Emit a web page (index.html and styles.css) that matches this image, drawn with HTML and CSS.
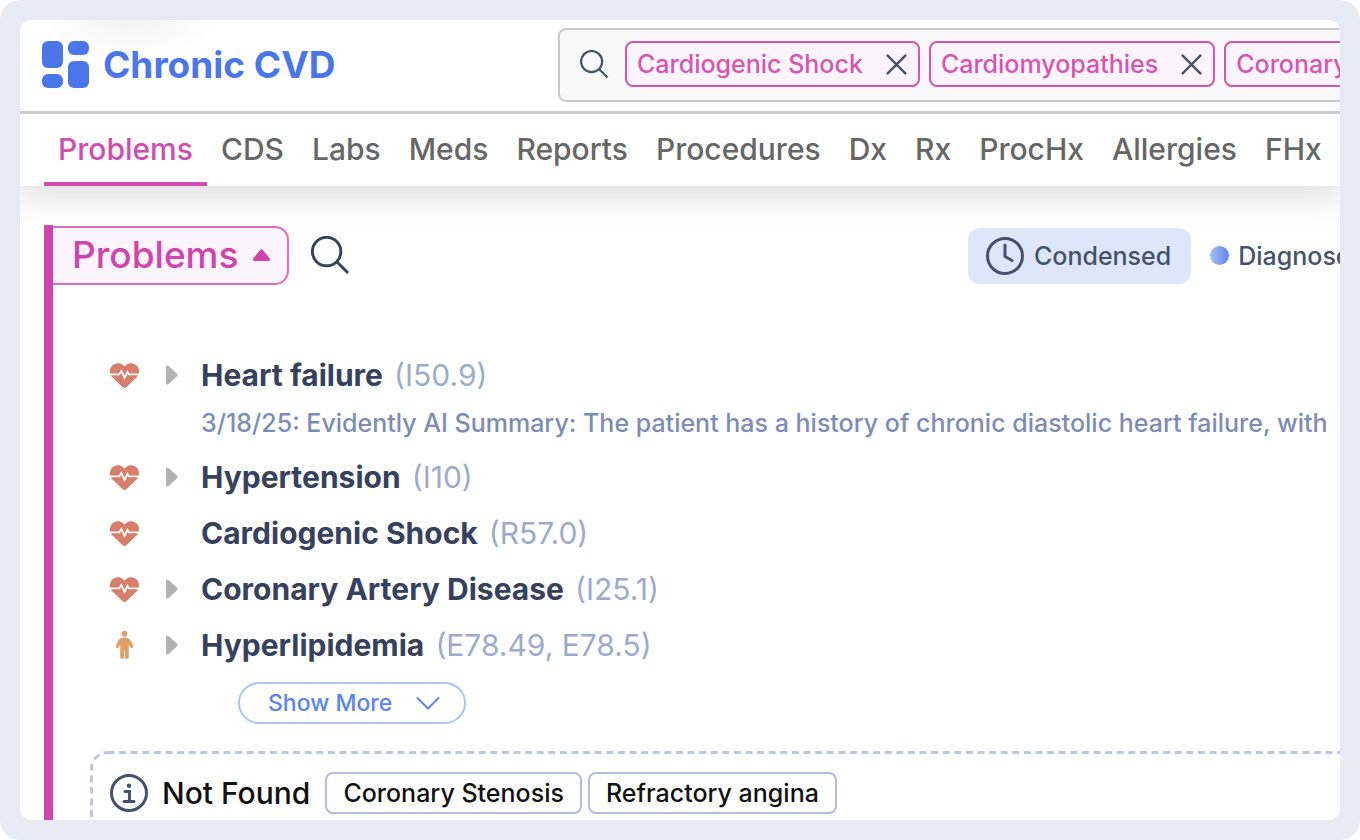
FILE: index.html
```html
<!DOCTYPE html>
<html lang="en">
<head>
<meta charset="utf-8">
<title>Chronic CVD</title>
<link rel="stylesheet" href="styles.css">
</head>
<body>
<svg class="defs" aria-hidden="true">
  <symbol id="search" viewBox="0 0 40 40"><circle cx="16" cy="16" r="14.6"/><path d="M26.5 26.5 38 38"/></symbol>
  <symbol id="close" viewBox="0 0 24 24"><path d="M2 2 22 22M22 2 2 22"/></symbol>
  <symbol id="heart" viewBox="0 0 29 25"><path d="M14.500 25C13.800 25 13.200 24.700 12.700 24.200L2.500 14.500C-.8 11.200-.8 6 2 2.800 5-.4 9.800-.6 13 2.200L14.500 3.600 16 2.200C19.200-.6 24-.4 27 2.800c2.800 3.200 2.800 8.400-.5 11.700L16.300 24.200C15.800 24.700 15.200 25 14.500 25z"/><path class="pulse" d="M0 11.300H9.200L11.400 8 14.600 14.800 17.400 9 18.800 11.300H29"/></symbol>
  <symbol id="person" viewBox="0 0 20 30"><circle cx="10" cy="3.2" r="3.1"/><path d="M10 7c-3.300 0-5.400 1.300-6.700 3.500L1 15.800c-.9 2.200 1.900 3.500 2.900 1.500L5.500 14.800V28c0 2.300 4.100 2.300 4.100 0v-7h.8v7c0 2.300 4.100 2.300 4.100 0V14.800l1.600 2.500c1 2 3.800.7 2.900-1.500l-2.300-5.300C15.400 8.300 13.300 7 10 7z"/></symbol>
  <symbol id="caret" viewBox="0 0 12 20"><path d="M0 2C0 .4 1.600-.2 2.700 1l8.300 7.800c.8.800.8 1.600 0 2.400L2.700 19C1.600 20.200 0 19.600 0 18z"/></symbol>
</svg>
<div class="frame">
  <div class="panel">
    <header class="header">
      <div class="brand">
        <svg class="logo" viewBox="0 0 47 47" aria-hidden="true"><rect x="0" y="0" width="21" height="27" rx="6"/><rect x="26" y="0" width="21" height="14" rx="6"/><rect x="0" y="33" width="21" height="14" rx="6"/><rect x="26" y="20" width="21" height="27" rx="6"/></svg>
        <h1 class="title">Chronic CVD</h1>
      </div>
      <div class="searchbar">
        <svg class="icon icon-small" aria-hidden="true"><use href="#search"/></svg>
        <span class="chip">Cardiogenic Shock<button class="remove" aria-label="Remove Cardiogenic Shock"><svg><use href="#close"/></svg></button></span>
        <span class="chip">Cardiomyopathies<button class="remove" aria-label="Remove Cardiomyopathies"><svg><use href="#close"/></svg></button></span>
        <span class="chip">Coronary</span>
      </div>
    </header>
    <nav class="tabs">
      <a class="tab active" href="#problems">Problems</a>
      <a class="tab" href="#cds">CDS</a>
      <a class="tab" href="#labs">Labs</a>
      <a class="tab" href="#meds">Meds</a>
      <a class="tab" href="#reports">Reports</a>
      <a class="tab" href="#procedures">Procedures</a>
      <a class="tab" href="#dx">Dx</a>
      <a class="tab" href="#rx">Rx</a>
      <a class="tab" href="#prochx">ProcHx</a>
      <a class="tab" href="#allergies">Allergies</a>
      <a class="tab" href="#fhx">FHx</a>
    </nav>
    <main class="content">
      <div class="toolbar">
        <button class="section-toggle">Problems<svg class="up" viewBox="0 0 18 12" aria-hidden="true"><path d="M7.800.8 1 9c-1 1.400-.4 3 1.200 3h13.600c1.600 0 2.200-1.600 1.200-3L10.200.8c-.7-.9-1.700-.9-2.400 0z"/></svg></button>
        <button class="plain" aria-label="Search problems"><svg class="icon icon-large"><use href="#search"/></svg></button>
        <div class="views">
          <button class="condensed"><svg class="badge" viewBox="0 0 38 38" aria-hidden="true"><circle cx="19" cy="19" r="17.500"/><path d="M19 8v11.500l7 4"/></svg>Condensed</button>
          <span class="legend"><span class="dot"></span>Diagnosed</span>
        </div>
      </div>
      <ul class="list">
        <li class="item">
          <svg class="heart" aria-hidden="true"><use href="#heart"/></svg>
          <button class="expand" aria-label="Expand Heart failure"><svg><use href="#caret"/></svg></button>
          <span class="name">Heart failure <span class="code">(I50.9)</span></span>
          <p class="summary">3/18/25: Evidently AI Summary: The patient has a history of chronic diastolic heart failure, with</p>
        </li>
        <li class="item">
          <svg class="heart" aria-hidden="true"><use href="#heart"/></svg>
          <button class="expand" aria-label="Expand Hypertension"><svg><use href="#caret"/></svg></button>
          <span class="name">Hypertension <span class="code">(I10)</span></span>
        </li>
        <li class="item">
          <svg class="heart" aria-hidden="true"><use href="#heart"/></svg>
          <span class="name">Cardiogenic Shock <span class="code">(R57.0)</span></span>
        </li>
        <li class="item">
          <svg class="heart" aria-hidden="true"><use href="#heart"/></svg>
          <button class="expand" aria-label="Expand Coronary Artery Disease"><svg><use href="#caret"/></svg></button>
          <span class="name">Coronary Artery Disease <span class="code">(I25.1)</span></span>
        </li>
        <li class="item">
          <svg class="person" aria-hidden="true"><use href="#person"/></svg>
          <button class="expand" aria-label="Expand Hyperlipidemia"><svg><use href="#caret"/></svg></button>
          <span class="name">Hyperlipidemia <span class="code">(E78.49, E78.5)</span></span>
        </li>
      </ul>
      <button class="more">Show More<svg viewBox="0 0 24 14" aria-hidden="true"><path d="M1 1.500 12 12.500 23 1.500"/></svg></button>
      <section class="missing">
        <svg class="outline" aria-hidden="true"><rect x="1.500" y="1.500" width="100%" height="120" rx="16"/></svg>
        <svg class="badge" viewBox="0 0 38 38" aria-hidden="true"><circle cx="19" cy="19" r="17.500"/><path d="M15 17.500h4.500V27M14 27.500h10"/><circle class="solid" cx="19" cy="11.800" r="2.200"/></svg>
        <h2 class="missing-title">Not Found</h2>
        <span class="tag">Coronary Stenosis</span>
        <span class="tag">Refractory angina</span>
      </section>
    </main>
  </div>
</div>
</body>
</html>
```
FILE: styles.css
```css
* { box-sizing: border-box; }
body {
  margin: 0;
  background: #fff;
  font-family: Inter, "Liberation Sans", sans-serif;
  color: #36415d;
}
button {
  font: inherit;
  color: inherit;
  background: none;
  border: 0;
  padding: 0;
  cursor: pointer;
}
svg { display: block; flex: none; }
.defs { position: absolute; width: 0; height: 0; }

.frame {
  height: 100vh;
  padding: 20px;
  background: #e6ebf3;
  border-radius: 20px;
}
.panel {
  height: 100%;
  overflow: hidden;
  background: #fff;
  border-radius: 12px;
  white-space: nowrap;
}

.header {
  position: relative;
  z-index: 1;
  display: flex;
  align-items: flex-start;
  padding: 8px 8px 9px 22px;
  border-bottom: 3px solid #ccc;
  background: radial-gradient(90px 40px at 110px 0, #f3f3f3, #fff);
}
.brand {
  flex: 0 0 40%;
  display: flex;
  align-items: center;
  gap: 14px;
  height: 73px;
}
.logo { width: 47px; height: 47px; fill: #4b76ea; }
.title { margin: 0; font-size: 37px; font-weight: 700; line-height: 44px; color: #4b76ea; }
.searchbar {
  flex: 1;
  display: flex;
  align-items: center;
  gap: 9px;
  height: 74px;
  margin-right: -20px;
  padding: 0 20px 2px;
  border: 2px solid #c9c9c9;
  border-radius: 8px;
  background: #f9f9f9;
}
.icon { fill: none; stroke: #46516b; }
.icon-small { width: 29px; height: 29px; margin-right: 7px; stroke-width: 3px; }
.icon-large { width: 39px; height: 39px; stroke: #36415d; stroke-width: 3px; }
.chip {
  display: flex;
  align-items: center;
  gap: 22px;
  height: 46px;
  padding: 0 10px;
  border: 2px solid #d655b2;
  border-radius: 8px;
  background: #fcf4fd;
  color: #d655b2;
  font-size: 25px;
  font-weight: 500;
}
.remove svg { width: 23px; height: 23px; fill: none; stroke: #46516b; stroke-width: 2.5px; }

.tabs {
  display: flex;
  height: 72px;
  padding-left: 24px;
  box-shadow: 0 2px 36px 6px rgba(0, 0, 0, 0.15);
}
.tab {
  padding: 0 14px;
  border-bottom: 4px solid transparent;
  line-height: 70px;
  font-size: 30px;
  font-weight: 500;
  color: #666;
  text-decoration: none;
}
.tab.active { color: #d24bb0; border-color: #d24bb0; }

.content {
  height: 620px;
  margin: 39px 0 0 24px;
  border-left: 9px solid #d045ad;
}
.toolbar { display: flex; align-items: center; gap: 22px; padding-top: 1px; }
.section-toggle {
  display: flex;
  align-items: center;
  gap: 14px;
  height: 59px;
  padding: 0 16px 2px 19px;
  border: 2px solid #dc6fbe;
  border-left: 0;
  border-radius: 0 14px 14px 0;
  background: #fcf4fd;
  color: #d045ad;
  font-size: 37px;
  font-weight: 500;
}
.up { width: 19px; height: 12px; fill: #d045ad; }
.views {
  display: flex;
  align-items: center;
  gap: 19px;
  margin: 0 -26px 0 auto;
  font-size: 25px;
  font-weight: 500;
  color: #46516b;
}
.condensed {
  display: flex;
  align-items: center;
  gap: 10px;
  height: 56px;
  padding: 0 20px 0 18px;
  border-radius: 12px;
  background: #dde6fb;
}
.badge {
  width: 38px;
  height: 38px;
  fill: none;
  stroke: #46516b;
  stroke-width: 3px;
  stroke-linecap: round;
}
.solid { fill: #46516b; stroke: none; }
.legend { display: flex; align-items: center; gap: 9px; }
.dot {
  width: 19px;
  height: 19px;
  border-radius: 50%;
  background: linear-gradient(90deg, #a9bff6, #5f86ec);
}

.list { margin: 62px 0 0; padding: 0 0 0 57px; list-style: none; }
.item {
  display: grid;
  grid-template-columns: 30px 38px 1fr;
  grid-template-rows: 56px;
  align-items: center;
}
.heart { width: 29px; height: 25px; fill: #d67d6c; }
.pulse { fill: none; stroke: #fff; stroke-width: 1.8px; }
.person { width: 19px; height: 30px; margin-left: 5px; fill: #dda069; }
.expand { grid-column: 2; justify-self: end; }
.expand svg { width: 12px; height: 20px; fill: #b3b3b3; }
.name { grid-column: 3; margin-left: 23px; font-size: 30px; font-weight: 700; }
.code { margin-left: 4px; font-weight: 400; color: #9eaacb; }
.summary {
  grid-column: 3;
  margin: 0 0 6px 23px;
  line-height: 40px;
  font-size: 25px;
  font-weight: 450;
  color: #7d8cb4;
}

.more {
  display: flex;
  align-items: center;
  gap: 24px;
  height: 42px;
  margin: 9px 0 27px 185px;
  padding: 0 24px 0 28px;
  border: 2px solid #b0c2f8;
  border-radius: 21px;
  color: #5a82f0;
  font-size: 23px;
  font-weight: 500;
}
.more svg { width: 24px; height: 14px; fill: none; stroke: #5a82f0; stroke-width: 2px; }

.missing {
  position: relative;
  display: flex;
  align-items: center;
  gap: 6px;
  margin-left: 37px;
  padding: 21px 0 0 20px;
  color: #111;
}
.outline {
  position: absolute;
  top: 0;
  left: 0;
  width: 110%;
  height: 130px;
  fill: none;
  stroke: #bfc7dc;
  stroke-width: 3px;
  stroke-dasharray: 7 4.6;
}
.missing-title { margin: 0 9px 0 8px; font-size: 30px; font-weight: 500; }
.tag {
  height: 42px;
  padding: 0 16px;
  border: 2px solid #b3bdd8;
  border-radius: 8px;
  line-height: 38px;
  font-size: 25px;
  font-weight: 500;
}
```
